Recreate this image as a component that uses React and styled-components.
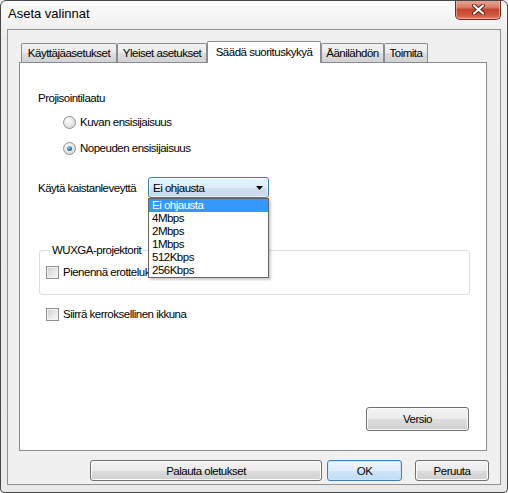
import React from 'react';
import styled, { createGlobalStyle } from 'styled-components';

const GlobalStyle = createGlobalStyle`
  html, body {
    margin: 0;
    padding: 0;
    background: #fff;
  }
  body {
    font-family: "Liberation Sans", Arial, sans-serif;
    font-size: 11.5px;
    letter-spacing: -0.5px;
    color: #000;
  }
`;

const Window = styled.div`
  width: 508px;
  height: 493px;
  box-sizing: border-box;
  border: 1px solid #474747;
  border-radius: 6px 6px 4px 4px;
  background: linear-gradient(#fbfbfb, #ececec 40px, #e9e9e9);
  display: flex;
  flex-direction: column;
  overflow: hidden;
`;

const TitleBar = styled.div`
  height: 28px;
  display: flex;
  align-items: flex-start;
  justify-content: space-between;
  padding: 0 6px 0 7px;
`;

const Title = styled.div`
  padding-top: 6px;
  line-height: 14px;
  font-size: 13px;
  letter-spacing: 0;
`;

const CloseButton = styled.div`
  width: 46px;
  height: 20px;
  margin-top: -1px;
  box-sizing: border-box;
  border: 1px solid #6d2a21;
  border-top: none;
  border-radius: 0 0 5px 5px;
  background: linear-gradient(#e9a996 0%, #d67a66 40%, #c5442f 50%, #d2583f 80%, #e4806a 100%);
  box-shadow: inset 0 0 0 1px rgba(255, 210, 200, 0.5);
  display: flex;
  align-items: center;
  justify-content: center;
`;

const Client = styled.div`
  height: 456px;
  margin: 0 6px 7px;
  box-sizing: border-box;
  border: 1px solid #8e9296;
  background: #f0f0f0;
  padding: 11px 12px 0 11px;
  display: flex;
  flex-direction: column;
`;

const TabStrip = styled.div`
  height: 21px;
  display: flex;
  align-items: flex-end;
  padding-left: 2px;
  position: relative;
  z-index: 1;
`;

const Tab = styled.div`
  box-sizing: border-box;
  width: ${(p) => p.$w}px;
  height: ${(p) => (p.$active ? 22 : 19)}px;
  margin-bottom: ${(p) => (p.$active ? -1 : 0)}px;
  padding-top: ${(p) => (p.$active ? 3 : 2)}px;
  line-height: 14px;
  text-align: center;
  white-space: nowrap;
  border: 1px solid #898c95;
  border-bottom: none;
  border-radius: 2px 2px 0 0;
  background: ${(p) => (p.$active ? '#fff' : 'linear-gradient(#f2f2f2, #ebebeb 50%, #dddddd 50%, #d2d2d2)')};
`;

const Panel = styled.div`
  width: 468px;
  height: 389px;
  box-sizing: border-box;
  border: 1px solid #898c95;
  background: #fff;
  padding: 28px 17px 19px 18px;
  display: flex;
  flex-direction: column;
`;

const SectionLabel = styled.div`
  line-height: 14px;
`;

const RadioList = styled.div`
  margin-top: 10px;
  padding-left: 25px;
  display: flex;
  flex-direction: column;
  gap: 12px;
`;

const OptionRow = styled.div`
  display: flex;
  align-items: center;
  gap: 4px;
  height: 14px;
  line-height: 14px;
  white-space: nowrap;
  margin-top: ${(p) => p.$mt || 0}px;
  padding-left: ${(p) => p.$pl || 0}px;
`;

const Radio = styled.span`
  position: relative;
  width: 13px;
  height: 13px;
  box-sizing: border-box;
  border-radius: 50%;
  border: 1px solid #8e8f8f;
  background: radial-gradient(circle at 40% 35%, #fdfdfd, #e2e2e2 60%, #cfcfcf);
  flex: none;

  &::after {
    content: '';
    display: ${(p) => (p.$checked ? 'block' : 'none')};
    position: absolute;
    left: 3px;
    top: 3px;
    width: 5px;
    height: 5px;
    border-radius: 50%;
    background: radial-gradient(circle at 40% 35%, #8fd0f5, #2a78b0 55%, #123f63);
  }
`;

const CheckBox = styled.span`
  width: 13px;
  height: 13px;
  box-sizing: border-box;
  border: 1px solid #8e8f8f;
  background: linear-gradient(135deg, #cbcbcb, #e9e9e9 60%, #f7f7f7);
  box-shadow: inset 0 0 0 1px #f4f4f4;
  flex: none;
`;

const BandRow = styled.div`
  display: flex;
  align-items: center;
  margin-top: 22px;
  height: 21px;
`;

const BandLabel = styled.div`
  width: 110px;
  white-space: nowrap;
`;

const ComboWrap = styled.div`
  position: relative;
  width: 121px;
  height: 21px;
  z-index: 3;
`;

const ComboBox = styled.div`
  height: 21px;
  box-sizing: border-box;
  border: 1px solid #3c7fb1;
  border-radius: 3px;
  background: linear-gradient(#eaf3fa, #dfecf7 50%, #cfe2f2 50%, #c2d9ee);
  box-shadow: inset 0 0 0 1px rgba(255, 255, 255, 0.6);
  display: flex;
  align-items: center;
  justify-content: space-between;
  padding: 0 5px 0 4px;
`;

const DropList = styled.div`
  position: absolute;
  top: 100%;
  left: 0;
  width: 121px;
  box-sizing: border-box;
  border: 1px solid #646464;
  background: #fff;
  box-shadow: 2px 2px 2px rgba(0, 0, 0, 0.2);
`;

const DropItem = styled.div`
  height: 13px;
  line-height: 13px;
  padding-left: 3px;
  background: ${(p) => (p.$selected ? '#3399ff' : 'transparent')};
  color: ${(p) => (p.$selected ? '#fff' : '#000')};
`;

const GroupBox = styled.div`
  margin: 52px -1px 0 1px;
  border: 1px solid #d5dfe5;
  border-radius: 3px;
  padding: 0 7px 15px 6px;
`;

const GroupTitle = styled.div`
  margin: -8px 0 0 4px;
  padding: 0 2px;
  width: fit-content;
  line-height: 14px;
  background: #fff;
`;

const Button = styled.div`
  box-sizing: border-box;
  width: ${(p) => p.$w}px;
  height: ${(p) => p.$h || 21}px;
  margin-left: ${(p) => p.$ml || 0}px;
  border: 1px solid ${(p) => (p.$default ? '#3c7fb1' : '#707070')};
  border-radius: 3px;
  background: ${(p) =>
    p.$default
      ? 'linear-gradient(#ecf5fc, #dfeefa 50%, #cde5f7 50%, #bfdcf3)'
      : 'linear-gradient(#f2f2f2, #ebebeb 50%, #dddddd 50%, #cfcfcf)'};
  box-shadow: inset 0 0 0 1px ${(p) => (p.$default ? '#c9e6fa' : '#fcfcfc')};
  display: flex;
  align-items: center;
  justify-content: center;
  white-space: nowrap;
`;

const VersionButton = styled(Button)`
  margin-top: auto;
  align-self: flex-end;
`;

const ButtonRow = styled.div`
  display: flex;
  justify-content: flex-end;
  margin: 9px -1px 0 0;
`;

const bandwidths = ['Ei ohjausta', '4Mbps', '2Mbps', '1Mbps', '512Kbps', '256Kbps'];

const tabs = [
  { label: 'Käyttäjäasetukset', w: 96 },
  { label: 'Yleiset asetukset', w: 90 },
  { label: 'Säädä suorituskykyä', w: 114, active: true },
  { label: 'Äänilähdön', w: 63 },
  { label: 'Toimita', w: 44 },
];

export default function App() {
  return (
    <>
      <GlobalStyle />
      <Window>
        <TitleBar>
          <Title>Aseta valinnat</Title>
          <CloseButton>
            <svg width="13" height="11" viewBox="0 0 13 11">
              <path d="M2 1.5 L11 9.5 M11 1.5 L2 9.5" stroke="#5a2018" strokeWidth="4" strokeLinecap="round" />
              <path d="M2 1.5 L11 9.5 M11 1.5 L2 9.5" stroke="#fff" strokeWidth="2.2" strokeLinecap="round" />
            </svg>
          </CloseButton>
        </TitleBar>
        <Client>
          <TabStrip>
            {tabs.map((t) => (
              <Tab key={t.label} $w={t.w} $active={t.active}>
                {t.label}
              </Tab>
            ))}
          </TabStrip>
          <Panel>
            <SectionLabel>Projisointilaatu</SectionLabel>
            <RadioList>
              <OptionRow>
                <Radio />
                Kuvan ensisijaisuus
              </OptionRow>
              <OptionRow>
                <Radio $checked />
                Nopeuden ensisijaisuus
              </OptionRow>
            </RadioList>

            <BandRow>
              <BandLabel>Käytä kaistanleveyttä</BandLabel>
              <ComboWrap>
                <ComboBox>
                  <span>Ei ohjausta</span>
                  <svg width="7" height="4" viewBox="0 0 7 4">
                    <path d="M0 0 H7 L3.5 4 Z" fill="#000" />
                  </svg>
                </ComboBox>
                <DropList>
                  {bandwidths.map((b, i) => (
                    <DropItem key={b} $selected={i === 0}>
                      {b}
                    </DropItem>
                  ))}
                </DropList>
              </ComboWrap>
            </BandRow>

            <GroupBox>
              <GroupTitle>WUXGA-projektorit</GroupTitle>
              <OptionRow $mt={8}>
                <CheckBox />
                Pienennä erottelukykyä
              </OptionRow>
            </GroupBox>

            <OptionRow $mt={12} $pl={8}>
              <CheckBox />
              Siirrä kerroksellinen ikkuna
            </OptionRow>

            <VersionButton $w={103} $h={24}>Versio</VersionButton>
          </Panel>
          <ButtonRow>
            <Button $w={232}>Palauta oletukset</Button>
            <Button $w={75} $ml={5} $default>OK</Button>
            <Button $w={74} $ml={13}>Peruuta</Button>
          </ButtonRow>
        </Client>
      </Window>
    </>
  );
}
